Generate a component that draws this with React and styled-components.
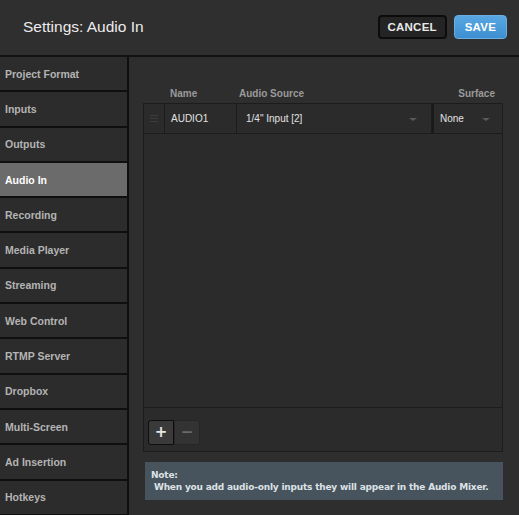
import React from 'react'
import styled, { createGlobalStyle } from 'styled-components'

const GlobalStyle = createGlobalStyle`
  html, body {
    margin: 0;
    padding: 0;
    background: #2e2e2e;
  }
  * { box-sizing: border-box; }
`

const menu = [
  'Project Format', 'Inputs', 'Outputs', 'Audio In', 'Recording', 'Media Player',
  'Streaming', 'Web Control', 'RTMP Server', 'Dropbox', 'Multi-Screen', 'Ad Insertion', 'Hotkeys',
]

const rows = [{ name: 'AUDIO1', source: '1/4" Input [2]', surface: 'None' }]

const App = () => {
  return (
    <Page>
      <GlobalStyle />
      <Header>
        <Title>Settings: Audio In</Title>
        <Actions>
          <Button>CANCEL</Button>
          <Button primary>SAVE</Button>
        </Actions>
      </Header>

      <Body>
        <Sidebar>
          {menu.map((item) => (
            <MenuItem key={item} active={item === 'Audio In'}>{item}</MenuItem>
          ))}
        </Sidebar>

        <Content>
          <Columns>
            <ColLabel />
            <ColLabel>Name</ColLabel>
            <ColLabel>Audio Source</ColLabel>
            <ColLabel right>Surface</ColLabel>
          </Columns>

          <Table>
            <List>
              {rows.map((row) => (
                <Row key={row.name}>
                  <Handle>
                    <span /><span /><span />
                  </Handle>
                  <Cell>{row.name}</Cell>
                  <Cell select>{row.source}<Caret right={14} /></Cell>
                  <Cell thick>{row.surface}<Caret right={12} /></Cell>
                </Row>
              ))}
            </List>
            <Footer>
              <Group>
                <IconButton active>+</IconButton>
                <IconButton>−</IconButton>
              </Group>
            </Footer>
          </Table>

          <Note>
            <b>Note:</b>
            <span>{' When you add audio-only inputs they will appear in the Audio Mixer.'}</span>
          </Note>
        </Content>
      </Body>
    </Page>
  )
}

const Page = styled.div`
  width: 519px;
  height: 515px;
  display: flex;
  flex-direction: column;
  background: #2e2e2e;
  font-family: "Liberation Sans", Arial, sans-serif;
  overflow: hidden;
`

const Header = styled.header`
  height: 57px;
  flex: none;
  display: flex;
  align-items: center;
  justify-content: space-between;
  padding: 0 12px 2px 23px;
  background: #2f2f2f;
  border-bottom: 2px solid #121212;
`

const Title = styled.h1`
  margin: 0;
  font-size: 15.5px;
  font-weight: normal;
  color: #ececec;
`

const Actions = styled.div`
  display: flex;
  gap: 7px;
`

const Button = styled.button`
  height: 24px;
  padding: 0 ${(p) => (p.primary ? '10px' : '8px')};
  border-radius: 4px;
  border: ${(p) => (p.primary ? '1px solid #6aaee4' : '2px solid #0c0c0c')};
  background: ${(p) => (p.primary ? 'linear-gradient(#58a7e3, #3d8fd0)' : '#242424')};
  color: ${(p) => (p.primary ? '#ffffff' : '#e8e8e8')};
  font-family: "Liberation Sans", Arial, sans-serif;
  font-weight: bold;
  font-size: 11.5px;
  letter-spacing: 0.2px;
`

const Body = styled.div`
  flex: 1;
  display: flex;
  min-height: 0;
`

const Sidebar = styled.nav`
  width: 129px;
  flex: none;
  display: flex;
  flex-direction: column;
  border-right: 2px solid #0f0f0f;
  background: #0f0f0f;
`

const MenuItem = styled.div`
  height: 33.3px;
  flex: none;
  margin-bottom: 2px;
  display: flex;
  align-items: center;
  padding-left: 5px;
  font-size: 10.5px;
  font-weight: bold;
  color: ${(p) => (p.active ? '#ffffff' : '#b4b4b4')};
  background: ${(p) => (p.active ? '#6b6b6b' : '#2c2c2c')};
`

const Content = styled.main`
  flex: 1;
  min-width: 0;
  display: flex;
  flex-direction: column;
  padding: 27px 16px 0 14px;
  background: #2e2e2e;
`

const Columns = styled.div`
  display: grid;
  grid-template-columns: 21px 72px 1fr 70px;
  height: 19px;
  align-items: center;
`

const ColLabel = styled.div`
  font-size: 10px;
  font-weight: bold;
  color: #9a9a9a;
  text-align: ${(p) => (p.right ? 'right' : 'left')};
  padding: ${(p) => (p.right ? '0 8px 0 0' : '0 0 0 6px')};
  &:nth-child(3) { padding-left: 3px; }
`

const Table = styled.section`
  height: 349px;
  display: flex;
  flex-direction: column;
  border: 1px solid #1c1c1c;
  background: #2b2b2b;
`

const List = styled.div`
  flex: 1;
  border-bottom: 1px solid #1c1c1c;
`

const Row = styled.div`
  display: grid;
  grid-template-columns: 21px 72px 1fr 70px;
  height: 30px;
  border-bottom: 1px solid #1c1c1c;
`

const Handle = styled.div`
  display: flex;
  flex-direction: column;
  justify-content: center;
  gap: 2px;
  padding: 0 6px;
  border-right: 1px solid #1c1c1c;

  span {
    height: 1px;
    background: #3c3c3c;
  }
`

const Cell = styled.div`
  position: relative;
  display: flex;
  align-items: center;
  padding-left: ${(p) => (p.select ? '9px' : '6px')};
  font-size: 10px;
  color: #e2e2e2;
  border-left: ${(p) => (p.thick ? '2px solid #1a1a1a' : 'none')};
  border-right: ${(p) => (p.thick ? 'none' : '1px solid #1c1c1c')};
`

const Caret = styled.i`
  position: absolute;
  right: ${(p) => p.right}px;
  top: 14px;
  width: 0;
  height: 0;
  border-left: 4px solid transparent;
  border-right: 4px solid transparent;
  border-top: 3px solid #5a5a5a;
`

const Footer = styled.div`
  height: 43px;
  flex: none;
  padding: 12px 0 0 4px;
`

const Group = styled.div`
  display: flex;
`

const IconButton = styled.button`
  width: 26px;
  height: 25px;
  padding: 0;
  border-radius: ${(p) => (p.active ? '3px 0 0 3px' : '0 3px 3px 0')};
  border: 1px solid ${(p) => (p.active ? '#0e0e0e' : '#262626')};
  background: ${(p) => (p.active ? '#3a3a3a' : '#333333')};
  color: ${(p) => (p.active ? '#e6e6e6' : '#6a6a6a')};
  font-family: "DejaVu Sans", sans-serif;
  font-weight: bold;
  font-size: 15px;
  line-height: 1;
`

const Note = styled.div`
  margin: 10px 0 0 2px;
  height: 38px;
  padding: 8px 6px 0;
  display: flex;
  flex-direction: column;
  gap: 1px;
  background: #47535d;
  color: #dde2e6;
  font-family: "DejaVu Sans", Verdana, sans-serif;
  font-size: 9px;
  letter-spacing: -0.2px;
  font-weight: bold;
  line-height: 11px;

  span { white-space: pre; }
`

export default App
